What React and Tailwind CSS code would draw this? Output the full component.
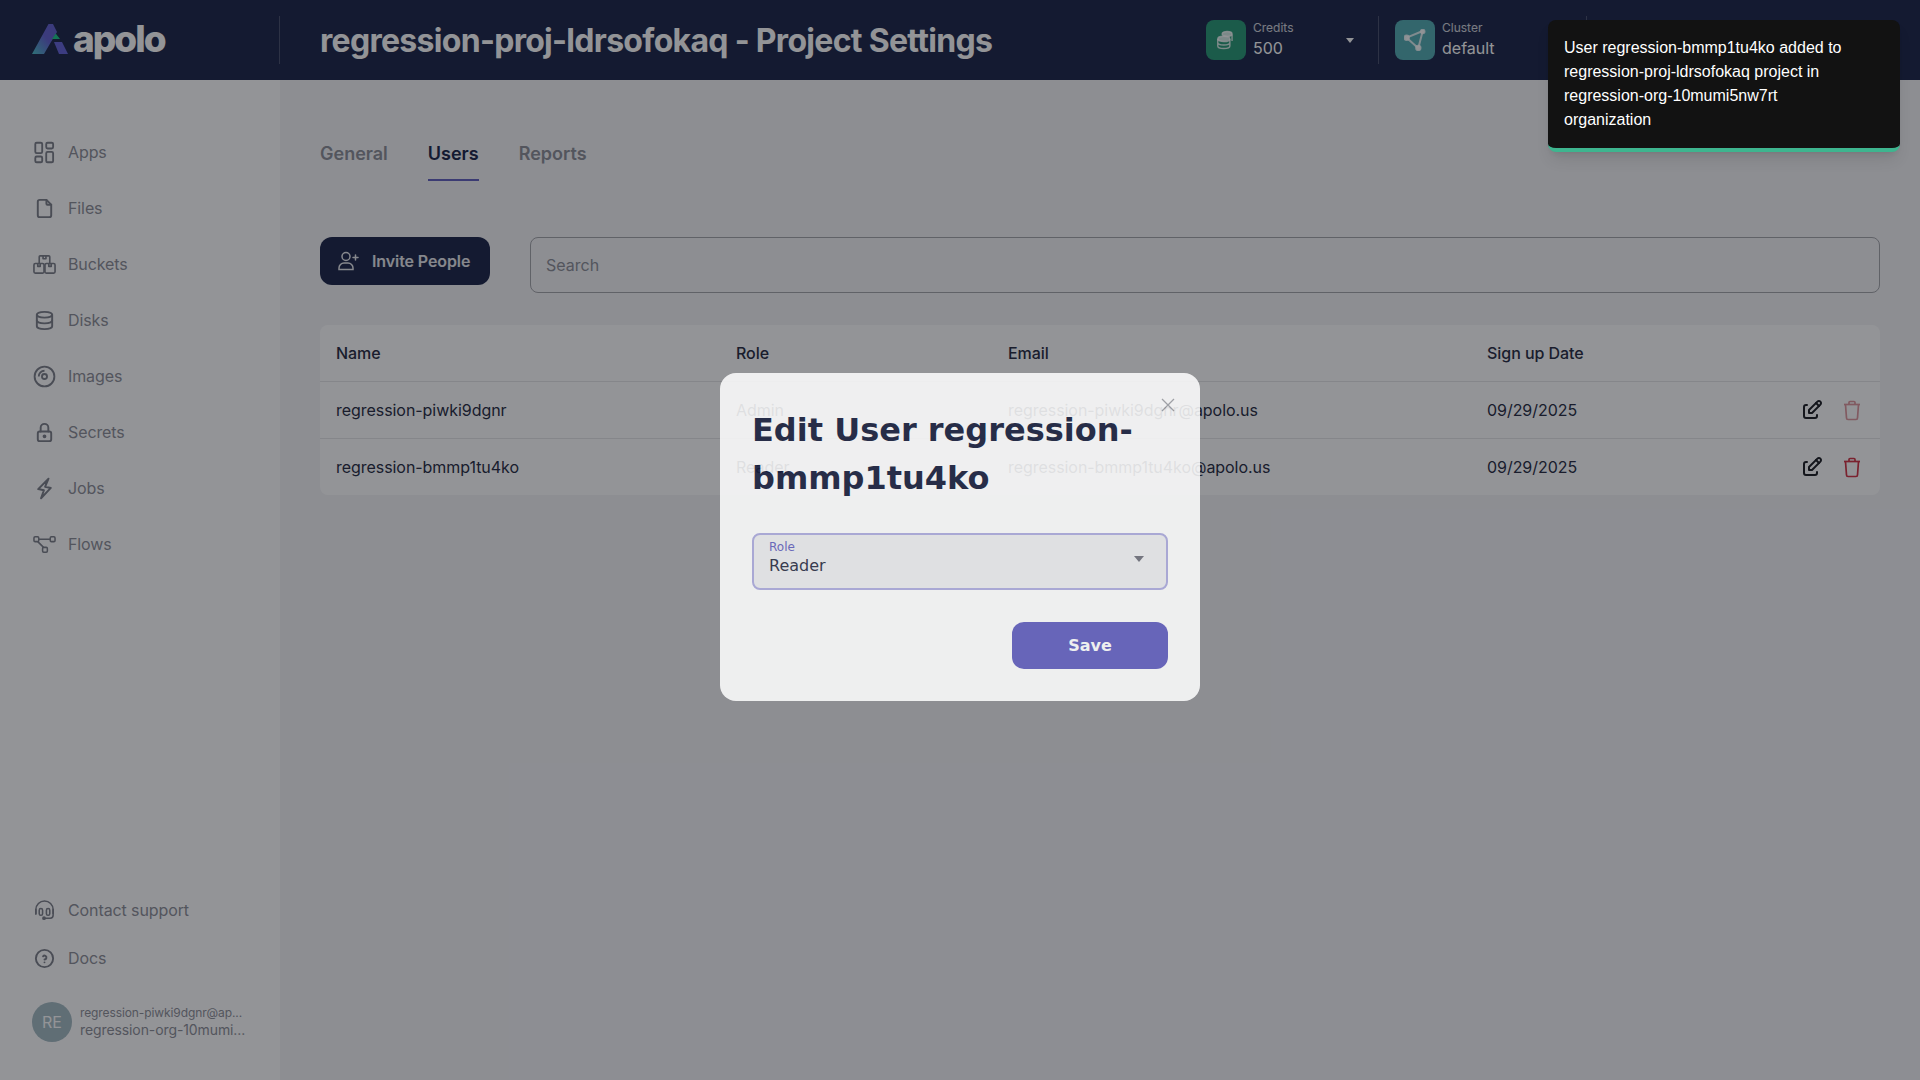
import { TbFile, TbDatabase, TbLock, TbHelpCircle, TbEdit } from 'react-icons/tb';

const AppsIcon = (props) => (
  <svg viewBox="0 0 20 20" fill="none" stroke="currentColor" strokeWidth="1.6" {...props}>
    <rect x="2" y="1.5" width="6" height="9" rx="1.2" />
    <rect x="11.5" y="1.5" width="6" height="5" rx="1.2" />
    <rect x="2" y="13.5" width="6" height="5" rx="1.2" />
    <rect x="11.5" y="9.5" width="6" height="9" rx="1.2" />
  </svg>
);

const BucketsIcon = (props) => (
  <svg viewBox="0 0 24 24" fill="none" stroke="currentColor" strokeWidth="1.7" strokeLinejoin="round" {...props}>
    <path d="M6.5 11V4a1 1 0 0 1 1-1h9a1 1 0 0 1 1 1v7" />
    <path d="M10.500 3v3h3V3" />
    <rect x="1" y="11" width="10.500" height="10" rx="1.400" />
    <rect x="12.500" y="11" width="10.500" height="10" rx="1.400" />
    <path d="M5 11v3h2.500v-3M16.500 11v3H19v-3" />
  </svg>
);

const DiscIcon = (props) => (
  <svg viewBox="0 0 20 20" fill="none" stroke="currentColor" strokeWidth="1.6" {...props}>
    <circle cx="10" cy="10" r="8.600" />
    <circle cx="10" cy="10" r="2.200" />
    <path d="M5 10a5 5 0 0 1 5-5" />
  </svg>
);

const BoltIcon = (props) => (
  <svg viewBox="0 0 20 20" fill="none" stroke="currentColor" strokeWidth="1.7" strokeLinejoin="round" strokeLinecap="round" {...props}>
    <path d="M13.500 1.500 4.500 10.500l5 1-2.500 7 8.500-9-5-1z" />
  </svg>
);

const FlowIcon = (props) => (
  <svg viewBox="0 0 24 20" fill="none" stroke="currentColor" strokeWidth="1.6" {...props}>
    <rect x="1" y="2" width="5" height="5" rx="1.200" />
    <rect x="18" y="2" width="5" height="5" rx="1.200" />
    <rect x="10" y="13" width="5" height="5" rx="1.200" />
    <path d="M6 4.500h12M5 7l6 6" />
  </svg>
);

const HeadsetIcon = (props) => (
  <svg viewBox="0 0 24 24" fill="none" stroke="currentColor" strokeWidth="1.600" strokeLinecap="round" {...props}>
    <path d="M3 15v-4a9 9 0 0 1 18 0v4" />
    <rect x="6.500" y="10" width="3.500" height="7" rx="1.700" />
    <rect x="14" y="10" width="3.500" height="7" rx="1.700" />
    <path d="M3 11v5M21 11v6a3 3 0 0 1-3 3h-5" />
    <circle cx="11.500" cy="20" r="1.200" fill="currentColor" />
  </svg>
);

const UserAddIcon = (props) => (
  <svg viewBox="0 0 24 24" fill="none" stroke="currentColor" strokeWidth="1.500" strokeLinecap="round" {...props}>
    <circle cx="10" cy="7.500" r="4" />
    <path d="M3 20.500v-1.500a5 5 0 0 1 5-5h4a5 5 0 0 1 5 5v1.500z" />
    <path d="M19.500 6v5M17 8.500h5" />
  </svg>
);

const TrashIcon = (props) => (
  <svg viewBox="0 0 24 24" fill="none" stroke="currentColor" strokeWidth="1.700" strokeLinejoin="round" {...props}>
    <path d="M4 6.500h16" />
    <path d="M9 6.500V4.500a1 1 0 0 1 1-1h4a1 1 0 0 1 1 1v2" />
    <path d="M5.500 6.500 6.500 20a1.500 1.500 0 0 0 1.500 1.500h8a1.500 1.500 0 0 0 1.500-1.500l1-13.500" />
  </svg>
);

const CoinsIcon = (props) => (
  <svg viewBox="0 0 20 20" fill="none" stroke="currentColor" strokeWidth="1.300" {...props}>
    <ellipse cx="11" cy="4.500" rx="4.500" ry="2.200" fill="currentColor" />
    <ellipse cx="8" cy="9" rx="5.500" ry="2.400" fill="currentColor" />
    <path d="M2.500 9v6.500c0 1.300 2.500 2.300 5.500 2.300s5.500-1 5.500-2.300V9M2.500 12.300c0 1.300 2.500 2.300 5.500 2.300s5.500-1 5.500-2.300M15.500 5v6" />
  </svg>
);

const ClusterIcon = (props) => (
  <svg viewBox="0 0 22 22" fill="none" stroke="currentColor" strokeWidth="2" strokeLinejoin="round" {...props}>
    <path d="M2.700 8.700 18.700 2 14.300 19.300z" />
    <circle cx="2.700" cy="8.700" r="2.200" fill="currentColor" />
    <circle cx="18.700" cy="2.500" r="1.800" fill="currentColor" />
    <circle cx="14.300" cy="19" r="2.200" fill="currentColor" />
  </svg>
);

const nav = [
  ['Apps', AppsIcon],
  ['Files', TbFile],
  ['Buckets', BucketsIcon],
  ['Disks', TbDatabase],
  ['Images', DiscIcon],
  ['Secrets', TbLock],
  ['Jobs', BoltIcon],
  ['Flows', FlowIcon],
];

const users = [
  { name: 'regression-piwki9dgnr', role: 'Admin', email: 'regression-piwki9dgnr@apolo.us', date: '09/29/2025', locked: true },
  { name: 'regression-bmmp1tu4ko', role: 'Reader', email: 'regression-bmmp1tu4ko@apolo.us', date: '09/29/2025', locked: false },
];

function NavRow({ label, Icon, h }) {
  return (
    <div className={`flex items-center gap-[12px] pl-[33px] text-[16px] tracking-[-0.1px] text-[#8f919a] ${h}`}>
      <Icon className="w-[23px] h-[23px] shrink-0 text-[#7f828c]" />
      <span>{label}</span>
    </div>
  );
}

function Header() {
  return (
    <header className="h-[80px] shrink-0 bg-[#202a4c] flex items-center text-white">
      <div className="w-[280px] h-[48px] shrink-0 border-r border-white/20 flex items-center pl-[32px] gap-[5px]">
        <svg viewBox="0 0 36 32" className="w-[36px] h-[32px]">
          <defs>
            <linearGradient id="logo" x1="0" y1="1" x2="1" y2="0">
              <stop offset="0" stopColor="#4fc0c8" />
              <stop offset="0.55" stopColor="#6563d0" />
              <stop offset="1" stopColor="#6563d0" />
            </linearGradient>
          </defs>
          <path d="M16.500 0H21l4 8-6 10-7 12H0z" fill="url(#logo)" />
          <path d="M22 18h8l6 12h-9z" fill="#6665d8" />
          <path d="M23.700 9.500 28 15h-8z" fill="#1fc98c" />
        </svg>
        <span className="text-[37px] leading-none font-extrabold tracking-[-2px] pb-[3px]">apolo</span>
      </div>
      <h1 className="pl-[40px] pt-[2px] text-[32px] font-bold tracking-[-0.7px]">regression-proj-ldrsofokaq - Project Settings</h1>
      <div className="ml-auto flex items-center h-[48px] pr-[40px]">
        <div className="flex items-center gap-[7px] w-[172px]">
          <div className="w-[40px] h-[40px] rounded-[8px] bg-[#2d9c78] flex items-center justify-center">
            <CoinsIcon className="w-[22px] h-[22px] text-white/80" />
          </div>
          <div>
            <div className="text-[12px] leading-[16px] text-white/80">Credits</div>
            <div className="text-[16px] leading-[24px]">500</div>
          </div>
          <svg viewBox="0 0 10 6" className="w-[8px] h-[5px] ml-auto mr-[24px]"><path d="M0 0h10L5 6z" fill="#ffffff" /></svg>
        </div>
        <div className="w-px h-[48px] bg-white/20" />
        <div className="flex items-center gap-[7px] pl-[16px] w-[208px] border-r border-white/20 h-[48px]">
          <div className="w-[40px] h-[40px] rounded-[8px] bg-[#57aeb4] flex items-center justify-center">
            <ClusterIcon className="w-[22px] h-[22px] text-white/80" />
          </div>
          <div>
            <div className="text-[12px] leading-[16px] text-white/80">Cluster</div>
            <div className="text-[16px] leading-[24px]">default</div>
          </div>
        </div>
        <div className="w-[293px]" />
      </div>
    </header>
  );
}

function Sidebar() {
  return (
    <aside className="w-[280px] shrink-0 bg-white flex flex-col justify-between pt-[44px] pb-[38px]">
      <nav>
        {nav.map(([label, Icon]) => (
          <NavRow key={label} label={label} Icon={Icon} h="h-[56px]" />
        ))}
      </nav>
      <div>
        <NavRow label="Contact support" Icon={HeadsetIcon} h="h-[48px]" />
        <NavRow label="Docs" Icon={TbHelpCircle} h="h-[48px]" />
        <div className="flex items-center gap-[8px] pl-[32px] mt-[20px]">
          <div className="w-[40px] h-[40px] rounded-full bg-[#a6bcc4] flex items-center justify-center text-[16px] text-white">RE</div>
          <div className="text-[#8f919a] tracking-[-0.1px]">
            <div className="text-[12px] leading-[16px]">regression-piwki9dgnr@ap...</div>
            <div className="text-[14px] leading-[18px]">regression-org-10mumi...</div>
          </div>
        </div>
      </div>
    </aside>
  );
}

function Main() {
  return (
    <main className="flex-1 bg-[#f4f4f7] px-[40px]">
      <div className="flex gap-[40px] pt-[60px] text-[18px] font-semibold text-[#8f919a]">
        <div className="h-[41px]">General</div>
        <div className="h-[41px] text-[#202a4c] border-b-2 border-[#6563c0]">Users</div>
        <div className="h-[41px]">Reports</div>
      </div>

      <div className="flex items-start gap-[40px] mt-[56px]">
        <button className="w-[170px] h-[48px] rounded-[12px] bg-[#202a4c] text-white/90 text-[16px] font-semibold tracking-[-0.1px] flex items-center pl-[16px] gap-[12px]">
          <UserAddIcon className="w-[24px] h-[24px]" />
          Invite People
        </button>
        <div className="flex-1 h-[56px] rounded-[8px] border border-[#a6a7ab] flex items-center pl-[15px] text-[16px] text-[#8f919a]">
          Search
        </div>
      </div>

      <div className="mt-[32px] bg-white rounded-[8px] text-[16px] tracking-[-0.05px] text-[#2b2f45]">
        <div className="grid grid-cols-[400px_272px_479px_1fr] items-center h-[56px] px-[16px] font-medium text-[#2b2f45]">
          <div>Name</div>
          <div>Role</div>
          <div>Email</div>
          <div>Sign up Date</div>
        </div>
        {users.map((u) => (
          <div key={u.name} className="grid grid-cols-[400px_272px_479px_1fr] items-center h-[57px] px-[16px] border-t border-[#e6e6e9]">
            <div>{u.name}</div>
            <div>{u.role}</div>
            <div>{u.email}</div>
            <div className="flex items-center justify-between">
              <span>{u.date}</span>
              <div className="flex items-center gap-[16px]">
                <TbEdit className="w-[24px] h-[24px] text-[#202228]" />
                <TrashIcon className={`w-[24px] h-[24px] ${u.locked ? 'text-[#e09aa0]' : 'text-[#d33848]'}`} />
              </div>
            </div>
          </div>
        ))}
      </div>
    </main>
  );
}

function EditModal() {
  return (
    <div className="absolute inset-0 bg-[#04060f]/43 flex items-center justify-center pb-[6px] font-['DejaVu_Sans',sans-serif]">
      <div className="relative w-[480px] bg-white rounded-[16px] px-[32px] pt-[33px] pb-[32px] opacity-[0.86]">
        <svg viewBox="0 0 14 14" className="absolute top-[25px] right-[25px] w-[14px] h-[14px]" fill="none" stroke="#a0a2a8" strokeWidth="1.300">
          <path d="M1 1l12 12M13 1 1 13" />
        </svg>
        <h2 className="text-[32px] leading-[48px] font-bold text-[#161d3c]">Edit User regression-bmmp1tu4ko</h2>
        <div className="mt-[31px] h-[57px] rounded-[8px] border-2 border-[#aeaddf] bg-[#edeef0] flex items-center justify-between pl-[15px] pr-[22px] pb-[6px]">
          <div>
            <div className="text-[12px] leading-[14px] text-[#6563c0]">Role</div>
            <div className="text-[16px] leading-[24px] text-[#2b2f45]">Reader</div>
          </div>
          <svg viewBox="0 0 10 6" className="w-[10px] h-[6px]"><path d="M0 0h10L5 6z" fill="#70727c" /></svg>
        </div>
        <div className="flex justify-end mt-[32px]">
          <button className="w-[156px] h-[47px] rounded-[12px] bg-[#615fc0] text-white text-[16px] font-bold">Save</button>
        </div>
      </div>
    </div>
  );
}

function Toast() {
  return (
    <div className="absolute top-[20px] right-[20px] w-[352px] rounded-[8px] bg-[#121212] border-b-4 border-[#3eb58f] shadow-lg pt-[16px] pb-[16px] pl-[16px] pr-[40px] text-[16px] leading-[24px] text-white font-['Liberation_Sans',sans-serif]">
      User regression-bmmp1tu4ko added to regression-proj-ldrsofokaq project in regression-org-10mumi5nw7rt organization
    </div>
  );
}

export default function App() {
  return (
    <div className="relative h-screen overflow-hidden flex flex-col font-['Inter',sans-serif]">
      <Header />
      <div className="flex-1 flex">
        <Sidebar />
        <Main />
      </div>
      <EditModal />
      <Toast />
    </div>
  );
}
